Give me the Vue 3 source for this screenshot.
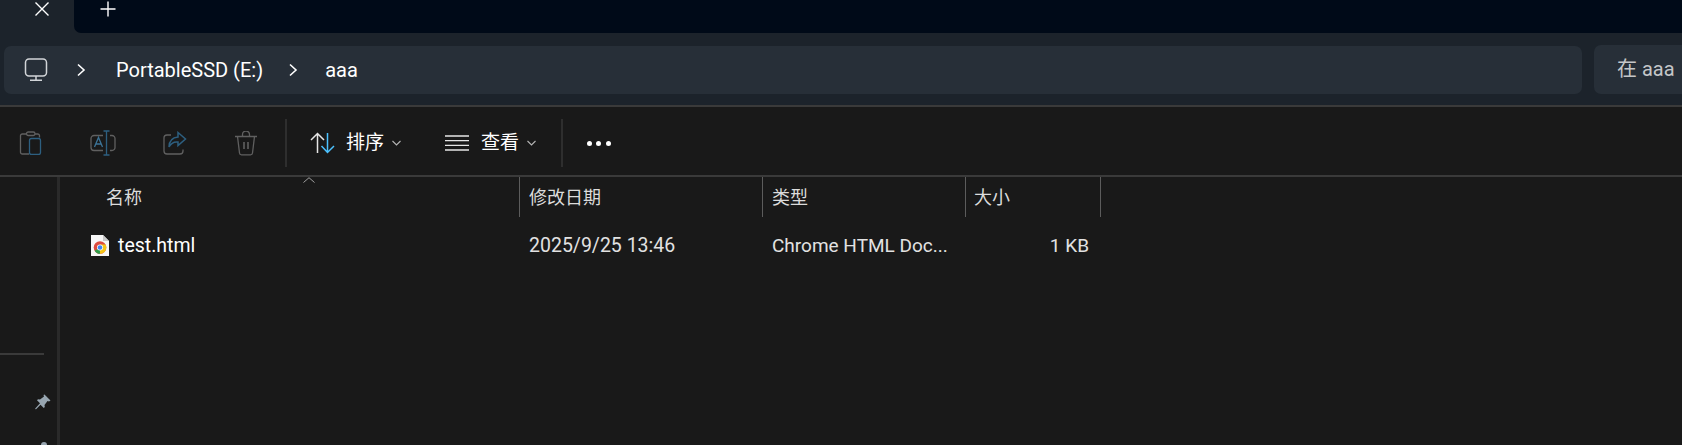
<script setup>
const columns = [
  { label: '名称', width: 460, indent: 46 },
  { label: '修改日期', width: 243, indent: 9 },
  { label: '类型', width: 203, indent: 9 },
  { label: '大小', width: 135, indent: 8 }
]
</script>

<template>
  <div class="explorer">
    <div class="tabstrip">
      <div class="tab">
        <svg width="16" height="16" viewBox="0 0 16 16">
          <path d="M1.5 1.5 14.5 14.5M14.5 1.5 1.5 14.5" stroke="#fff" stroke-width="1.4" fill="none" />
        </svg>
      </div>
      <div class="tabstrip__rest">
        <svg width="16" height="16" viewBox="0 0 16 16">
          <path d="M8 .5V15.5M.5 8H15.5" stroke="#fff" stroke-width="1.4" fill="none" />
        </svg>
      </div>
    </div>

    <div class="navbar">
      <div class="address">
        <svg class="address__pc" width="24" height="24" viewBox="0 0 24 24" fill="none" stroke="#d2d5d8" stroke-width="1.5">
          <rect x="1.5" y="1" width="21" height="17" rx="3.5" />
          <path d="M12 18v4M6 22.2h12" />
        </svg>
        <svg class="crumb-arrow crumb-arrow--first" width="10" height="14" viewBox="0 0 10 14">
          <path d="M2 1.5 8 7 2 12.5" stroke="#fff" stroke-width="1.6" fill="none" />
        </svg>
        <span class="crumb">PortableSSD (E:)</span>
        <svg class="crumb-arrow crumb-arrow--second" width="10" height="14" viewBox="0 0 10 14">
          <path d="M2 1.5 8 7 2 12.5" stroke="#fff" stroke-width="1.6" fill="none" />
        </svg>
        <span class="crumb crumb--last">aaa</span>
      </div>
      <div class="search">在 aaa</div>
    </div>

    <div class="toolbar">
      <div class="toolbar__icons">
        <svg width="24" height="24" viewBox="0 0 24 24" fill="none" stroke-width="1.3">
          <path d="M7 3H3.5A1.8 1.8 0 0 0 1.5 5v16a1.8 1.8 0 0 0 2 2H10M16 3h2.5a1.8 1.8 0 0 1 2 2v1.5" stroke="#606060" />
          <rect x="7.5" y="1" width="8.5" height="3.5" rx="1.7" stroke="#606060" />
          <rect x="10.5" y="7.5" width="11" height="16" rx="2" stroke="#2d5f80" />
        </svg>
        <svg width="26" height="26" viewBox="0 0 26 26" fill="none" stroke-width="1.3">
          <path d="M13 5.5H4a3 3 0 0 0-3 3v9a3 3 0 0 0 3 3h9M20 5.5h2a3 3 0 0 1 3 3v9a3 3 0 0 1-3 3h-2" stroke="#606060" />
          <path d="M16.5 1v24M13.5 1h6M13.5 25h6" stroke="#2d5f80" />
          <path d="M4.5 17 8.5 7.5l4 9.5M6 14h5" stroke="#3c7396" />
        </svg>
        <svg width="24" height="24" viewBox="0 0 24 24" fill="none" stroke-width="1.3">
          <path d="M8 4H4a3 3 0 0 0-3 3v13a3 3 0 0 0 3 3h13a3 3 0 0 0 3-3v-1.500" stroke="#606060" />
          <path d="M15 1.500 22.500 8 15 14.500v-3.500c-4-.5-7 1-9 5 .2-6 3.500-9.500 9-10z" stroke="#2d5f80" stroke-width="1.500" />
        </svg>
        <svg width="24" height="25" viewBox="0 0 24 25" fill="none" stroke="#606060" stroke-width="1.3">
          <path d="M1 5.500h22M3.500 5.500 5.500 22a2 2 0 0 0 2 1.800h9a2 2 0 0 0 2-1.800l2-16.500M8.500 5.500V3.500a2.500 2.500 0 0 1 7 0v2" />
          <path d="M10 11v7M14 11v7" stroke-width="1.600" />
        </svg>
      </div>
      <span class="toolbar__divider"></span>
      <button class="tool tool--sort">
        <svg width="26" height="22" viewBox="0 0 26 22" fill="none" stroke-width="1.500">
          <path d="M7.500 21V1.500M1 8l6.500-6.500L14 8" stroke="#e6e6e6" />
          <path d="M17.500 1v19.500M11.500 14l6 6.500 6.500-6.500" stroke="#4cc2ff" />
        </svg>
        <span class="tool__label">排序</span>
        <svg class="tool__chevron" width="9" height="6" viewBox="0 0 9 6">
          <path d="M.5 1 4.500 5 8.500 1" stroke="#b5b5b5" stroke-width="1.100" fill="none" />
        </svg>
      </button>
      <button class="tool tool--view">
        <svg width="24" height="16" viewBox="0 0 24 16" fill="none" stroke="#e6e6e6" stroke-width="1.300">
          <path d="M0 1h24M0 5.700h24M0 10.300h24M0 15h24" />
        </svg>
        <span class="tool__label">查看</span>
        <svg class="tool__chevron" width="9" height="6" viewBox="0 0 9 6">
          <path d="M.5 1 4.500 5 8.500 1" stroke="#b5b5b5" stroke-width="1.100" fill="none" />
        </svg>
      </button>
      <span class="toolbar__divider"></span>
      <div class="toolbar__more">
        <i></i><i></i><i></i>
      </div>
    </div>

    <div class="body">
      <aside class="sidebar">
        <hr class="sidebar__rule" />
        <svg class="sidebar__pin" width="16" height="16" viewBox="0 0 16 16">
          <path d="M9.500.5 15.500 6.500 14 7.500 12.500 7 9.500 11 9.800 13 8.800 14 5.500 10.700 1 15.300 0 15l.7-1L5 9.300 2 6.300l1-1 2 .2 4-3-.5-1.500z" fill="#97a5b0" />
        </svg>
        <span class="sidebar__next"></span>
      </aside>
      <main class="list">
        <div class="list__head">
          <div
            v-for="col in columns"
            :key="col.label"
            class="list__col"
            :style="{ width: col.width + 'px', paddingLeft: col.indent + 'px' }"
          >
            {{ col.label }}
          </div>
          <svg class="list__caret" width="12" height="6" viewBox="0 0 12 6">
            <path d="M.5 5.500 6 .7l5.500 4.800" stroke="#a0a0a0" stroke-width="1" fill="none" />
          </svg>
        </div>
        <div class="row">
          <div class="row__name">
            <svg width="18" height="21" viewBox="0 0 18 21">
              <path d="M0 0h12l6 6v15H0z" fill="#f7f7f7" />
              <path d="M12 0v6h6z" fill="#c9c9c9" />
              <circle cx="9" cy="12.500" r="6.300" fill="#dd4b3e" />
              <path d="M9 12.500 3.600 15.700A6.300 6.300 0 0 0 9 18.800z" fill="#2f9e4a" />
              <path d="M9 12.500v6.300a6.300 6.300 0 0 0 5.600-9.300H9z" fill="#f5c518" />
              <circle cx="9" cy="12.500" r="3" fill="#fff" />
              <circle cx="9" cy="12.500" r="2.300" fill="#3f85f0" />
            </svg>
            <span>test.html</span>
          </div>
          <div class="row__date">2025/9/25 13:46</div>
          <div class="row__type">Chrome HTML Doc...</div>
          <div class="row__size">1 KB</div>
        </div>
      </main>
    </div>
  </div>
</template>

<style>
html,
body {
  margin: 0;
  background: #191919;
  overflow: hidden;
}
</style>

<style scoped>
.explorer {
  width: 1682px;
  height: 445px;
  overflow: hidden;
  display: flex;
  flex-direction: column;
  background: #191919;
  color: #fff;
  font-family: Roboto, "Noto Sans CJK SC", sans-serif;
}

.tabstrip {
  height: 33px;
  flex: none;
  display: flex;
  background: #1c232b;
}

.tab {
  width: 74px;
  flex: none;
  box-sizing: border-box;
  padding: 1px 0 0 34px;
}

.tabstrip__rest {
  flex: 1;
  box-sizing: border-box;
  padding: 1px 0 0 26px;
  background: #000a18;
  border-bottom-left-radius: 7px;
}

.tab svg,
.tabstrip__rest svg {
  display: block;
}

.navbar {
  height: 72px;
  flex: none;
  display: flex;
  gap: 12px;
  padding: 13px 0 11px 4px;
  box-sizing: border-box;
  background: #1c232b;
}

.address {
  width: 1578px;
  height: 48px;
  flex: none;
  display: flex;
  align-items: center;
  box-sizing: border-box;
  padding-left: 21px;
  background: #272f38;
  border-radius: 7px;
}

.address__pc {
  flex: none;
  margin-left: -1px;
}

.crumb-arrow--first {
  margin-left: 28px;
}

.crumb-arrow--second {
  margin-left: 25px;
}

.crumb {
  margin-left: 30px;
  font-size: 20px;
  line-height: 48px;
  white-space: nowrap;
}

.crumb--last {
  margin-left: 27px;
}

.search {
  flex: 1;
  height: 49px;
  margin-top: -1px;
  padding-left: 23px;
  line-height: 49px;
  font-size: 20px;
  color: #c4c6c8;
  background: #272f38;
  border-radius: 7px 0 0 7px;
  white-space: nowrap;
}

.toolbar {
  height: 72px;
  flex: none;
  display: flex;
  align-items: center;
  box-sizing: border-box;
  padding-top: 4px;
  border-top: 2px solid #3a3a3a;
  border-bottom: 2px solid #3a3a3a;
  background: #191919;
}

.toolbar__icons {
  width: 285px;
  flex: none;
  display: flex;
  align-items: center;
  box-sizing: border-box;
  padding-left: 19px;
  gap: 47px;
}

.toolbar__divider {
  width: 2px;
  height: 48px;
  flex: none;
  background: #2e2e2e;
}

.tool {
  display: flex;
  align-items: center;
  border: 0;
  padding: 0;
  background: none;
  color: #fff;
  font: inherit;
}

.tool--sort {
  margin-left: 23px;
}

.tool--view {
  margin-left: 44px;
}

.tool__label {
  margin-left: 10px;
  font-size: 19px;
  line-height: 24px;
}

.tool--view .tool__label {
  margin-left: 12px;
}

.tool__chevron {
  margin-left: 8px;
}

.tool--view + .toolbar__divider {
  margin-left: 25px;
}

.toolbar__more {
  margin-left: 24px;
  display: flex;
  gap: 4.300px;
}

.toolbar__more i {
  width: 5px;
  height: 5px;
  border-radius: 50%;
  background: #fff;
}

.body {
  flex: 1;
  display: flex;
  min-height: 0;
}

.sidebar {
  width: 60px;
  flex: none;
  box-sizing: border-box;
  padding-top: 176px;
  border-right: 3px solid #2a2a2a;
}

.sidebar__rule {
  width: 44px;
  height: 2px;
  margin: 0;
  border: 0;
  background: #3a3a3a;
}

.sidebar__pin {
  display: block;
  margin: 39px 0 0 35px;
}

.sidebar__next {
  display: block;
  width: 6px;
  height: 6px;
  margin: 32px 0 0 41px;
  border-radius: 50%;
  background: #97a5b0;
}

.list {
  flex: 1;
  min-width: 0;
}

.list__head {
  height: 40px;
  display: flex;
  position: relative;
}

.list__col {
  box-sizing: border-box;
  flex: none;
  line-height: 42px;
  font-size: 18px;
  color: #dcdcdc;
  border-right: 1px solid #5c5c5c;
}

.list__caret {
  position: absolute;
  left: 243px;
  top: 0;
}

.row {
  display: flex;
  align-items: center;
  height: 56px;
  font-size: 19.500px;
  color: #e2e2e2;
  white-space: nowrap;
}

.row__name {
  width: 460px;
  flex: none;
  box-sizing: border-box;
  padding-left: 31px;
  display: flex;
  align-items: center;
  gap: 9px;
  color: #fff;
}

.row__date {
  width: 243px;
  flex: none;
  box-sizing: border-box;
  padding-left: 9px;
}

.row__type {
  width: 203px;
  flex: none;
  box-sizing: border-box;
  padding-left: 9px;
  font-size: 19px;
}

.row__size {
  width: 134px;
  flex: none;
  box-sizing: border-box;
  padding-right: 11px;
  text-align: right;
  font-size: 19px;
}
</style>
